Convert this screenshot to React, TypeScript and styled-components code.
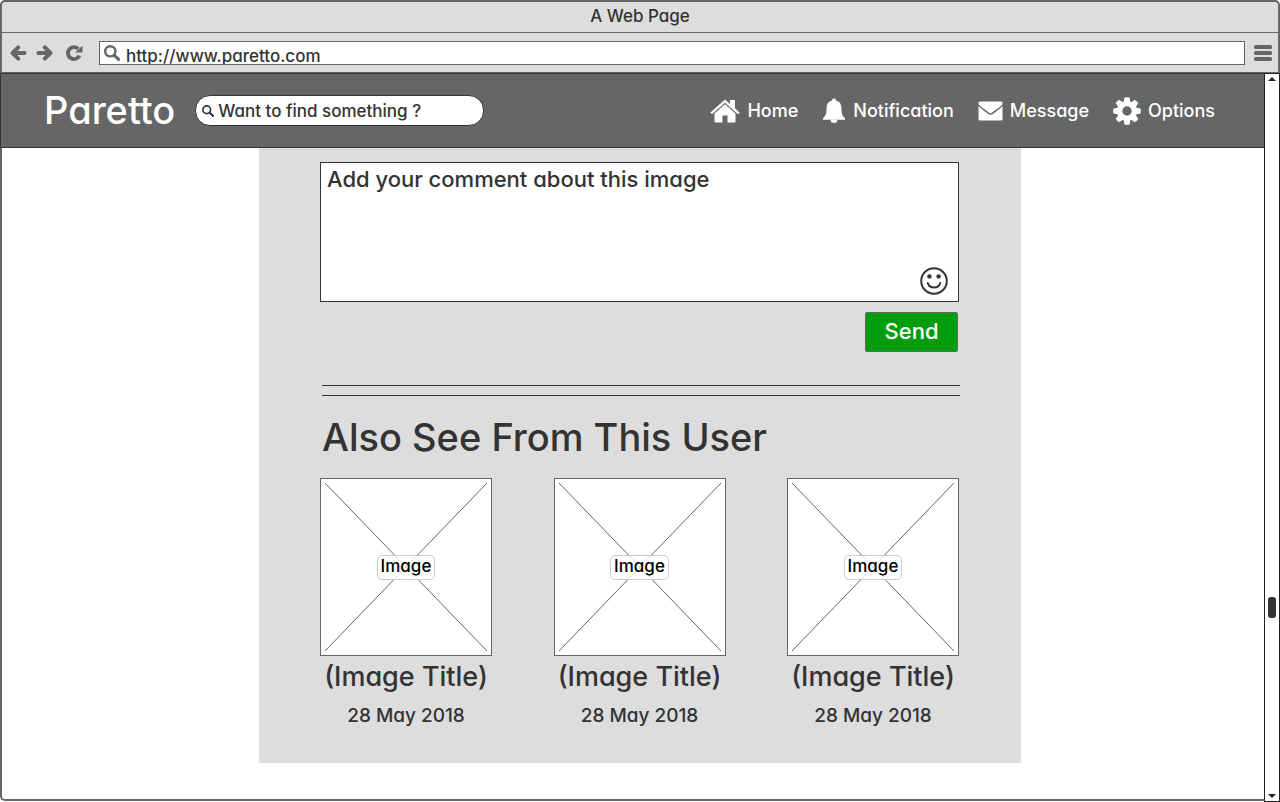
import React from 'react';
import styled, { createGlobalStyle, css } from 'styled-components';

const GlobalStyle = createGlobalStyle`
  *, *::before, *::after { box-sizing: border-box; }
  body {
    margin: 0;
    background: #fff;
    color: #333;
    font-family: Inter, Lato, "Liberation Sans", sans-serif;
    font-weight: 500;
    font-feature-settings: "cv11" 1, "ss03" 1;
  }
  button, input, textarea {
    font: inherit;
    font-feature-settings: inherit;
    color: inherit;
  }
`;

const BrowserWindow = styled.div`
  display: flex;
  flex-direction: column;
  min-height: 100vh;
`;

const Chrome = styled.div`
  border: 2px solid #666;
  border-bottom-width: 1px;
  border-radius: 5px 5px 0 0;
  background: #ddd;
`;

const TitleBar = styled.div`
  padding: 4px 0 5px;
  border-bottom: 1px solid #666;
  font-size: 17px;
  line-height: 21px;
  text-align: center;
`;

const Toolbar = styled.div`
  display: flex;
  align-items: center;
  gap: 9px;
  height: 39px;
  padding: 0 6px 0 8px;
`;

const ToolButton = styled.button<{ $spaced?: boolean }>`
  display: flex;
  padding: 0;
  border: 0;
  background: none;
  color: #666;
  ${(p) => p.$spaced && css`margin: 0 7px 0 4px;`}
`;

const AddressBar = styled.label`
  display: flex;
  flex: 1;
  align-items: center;
  gap: 6px;
  height: 24px;
  padding-left: 4px;
  border: 1px solid #666;
  background: #fff;
  color: #666;
`;

const AddressInput = styled.input`
  flex: 1;
  min-width: 0;
  height: 22px;
  padding: 6px 0 0;
  border: 0;
  outline: 0;
  background: none;
  color: #333;
  font-size: 17px;
  line-height: 16px;
`;

const Viewport = styled.div`
  display: flex;
  flex: 1;
`;

const Page = styled.div`
  display: flex;
  flex: 1;
  flex-direction: column;
  min-width: 0;
  margin-bottom: 1px;
`;

const Header = styled.header`
  display: flex;
  align-items: center;
  height: 75px;
  padding: 0 49px 2px 43px;
  border: 1px solid #333;
  border-right: 0;
  background: #666;
  color: #fff;
`;

const Logo = styled.a`
  color: #fff;
  font-size: 38px;
  line-height: 44px;
  text-decoration: none;
`;

const Search = styled.label`
  display: flex;
  align-items: center;
  gap: 4px;
  width: 289px;
  height: 31px;
  margin: 2px 0 0 20px;
  padding: 0 6px;
  border: 1px solid #333;
  border-radius: 15px;
  background: #fff;
  color: #333;
`;

const SearchInput = styled.input`
  flex: 1;
  min-width: 0;
  padding: 0;
  border: 0;
  outline: 0;
  background: none;
  font-size: 17px;
  line-height: 24px;
  &::placeholder { color: #333; opacity: 1; }
`;

const Nav = styled.nav`
  display: flex;
  gap: 24px;
  margin: 2px 0 0 auto;
`;

const NavLink = styled.a`
  display: flex;
  align-items: center;
  gap: 7px;
  color: #fff;
  font-size: 18px;
  line-height: 28px;
  text-decoration: none;
`;

const Main = styled.main`
  flex: 1;
  padding: 0 0 36px 14px;
  border: solid #666;
  border-width: 0 0 2px 2px;
  border-radius: 0 0 0 5px;
`;

const Panel = styled.div`
  max-width: 762px;
  margin: 0 auto;
  padding: 14px 62px 33px 61px;
  background: #ddd;
`;

const CommentForm = styled.form`
  display: flex;
  flex-direction: column;
  align-items: flex-end;
  gap: 10px;
`;

const CommentBox = styled.div`
  display: flex;
  align-items: flex-end;
  width: 100%;
  height: 140px;
  border: 1px solid #333;
  background: #fff;
`;

const CommentInput = styled.textarea`
  flex: 1;
  height: 100%;
  padding: 2px 6px;
  border: 0;
  outline: 0;
  resize: none;
  background: none;
  font-size: 22px;
  line-height: 28px;
  &::placeholder { color: #333; opacity: 1; }
`;

const EmojiButton = styled.button`
  display: flex;
  padding: 0 10px 6px 0;
  border: 0;
  background: none;
`;

const SendButton = styled.button`
  width: 93px;
  height: 40px;
  margin-right: 1px;
  padding: 0 0 2px;
  border: 1px solid #666;
  border-radius: 2px;
  background: #009e0f;
  color: #fff;
  font-size: 22px;
`;

const DoubleRule = styled.hr`
  height: 11px;
  margin: 33px -1px 0 2px;
  border: solid #333;
  border-width: 1px 0;
`;

const SectionTitle = styled.h2`
  margin: 17px 0 17px 2px;
  font-size: 38px;
  font-weight: 500;
  line-height: 48px;
  white-space: nowrap;
`;

const Gallery = styled.div`
  display: flex;
  justify-content: space-between;
`;

const Card = styled.figure`
  display: flex;
  flex-direction: column;
  align-items: center;
  width: 172px;
  margin: 0;
`;

const Thumb = styled.div`
  display: grid;
  width: 100%;
  height: 178px;
  place-items: center;
  border: 1px solid #666;
  background: #fff;
  & > * { grid-area: 1 / 1; }
`;

const ThumbLabel = styled.span`
  z-index: 1;
  height: 25px;
  padding: 0 3px;
  border: 1px solid #ccc;
  border-radius: 5px;
  background: rgba(255, 255, 255, 0.8);
  color: #000;
  font-size: 17px;
  line-height: 21px;
`;

const CardTitle = styled.figcaption`
  margin-top: 4px;
  font-size: 27px;
  line-height: 34px;
  white-space: nowrap;
`;

const CardDate = styled.time`
  margin-top: 8px;
  font-size: 19px;
  line-height: 28px;
`;

const Scrollbar = styled.div`
  display: flex;
  flex-direction: column;
  align-items: center;
  width: 16px;
  padding: 3px 0;
  border: 1px solid #222;
  background: #fff;
`;

const Track = styled.div`
  display: flex;
  flex: 1;
  flex-direction: column;
  align-items: center;
`;

const TrackSpace = styled.div<{ $grow: number }>`
  flex: ${(p) => p.$grow};
`;

const ThumbGrip = styled.div`
  width: 8px;
  height: 21px;
  border-radius: 3px;
  background: #333;
`;

const ArrowIcon = ({ flip }: { flip?: boolean }) => (
  <svg width="17" height="16" viewBox="0 0 17 16" fill="none" stroke="currentColor" strokeWidth="4" strokeLinecap="round" strokeLinejoin="round">
    {flip ? <path d="M2.4 8H14M8.8 2.4L14.4 8L8.8 13.6" /> : <path d="M14.6 8H3M8.2 2.4L2.6 8L8.2 13.6" />}
  </svg>
);

const ReloadIcon = () => (
  <svg width="17" height="16" viewBox="0 0 17 16">
    <path d="M13.4 10.6A6 6 0 1 1 12.2 3.8" fill="none" stroke="currentColor" strokeWidth="3.8" />
    <path d="M16.5 .5V7.5H9.2Z" fill="currentColor" />
  </svg>
);

const GlassIcon = ({ size, weight }: { size: number; weight: number }) => (
  <svg width={size} height={size} viewBox="0 0 16 16" fill="none" stroke="currentColor" strokeWidth={weight} strokeLinecap="round">
    <circle cx="6.3" cy="6.3" r="5.1" />
    <path d="M10.3 10.3L14.6 14.4" strokeWidth={weight + 0.6} />
  </svg>
);

const MenuIcon = () => (
  <svg width="18" height="16" viewBox="0 0 18 16" fill="currentColor">
    <rect y="0" width="18" height="4" rx="1.5" />
    <rect y="6" width="18" height="4" rx="1.5" />
    <rect y="12" width="18" height="4" rx="1.5" />
  </svg>
);

const HomeIcon = () => (
  <svg width="30" height="24" viewBox="0 0 30 24" fill="currentColor">
    <path d="M15 .5L20 5V1H25V9.2L29.6 13.4L28 15.2L15 3.8L2 15.2L.4 13.4Z" />
    <path d="M15 5.3L25.5 14.4V22.5Q25.5 23.5 24.5 23.5H17.5V16.5H12.5V23.5H5.5Q4.5 23.5 4.5 22.5V14.4Z" />
  </svg>
);

const BellIcon = () => (
  <svg width="24" height="26" viewBox="0 0 24 26" fill="currentColor">
    <path d="M12 .6C13.3 .6 14 1.4 14 2.5C17.6 3.4 19.4 6 19.4 9.8C19.4 15 20 17.6 23 20.2V21.8H1V20.2C4 17.6 4.6 15 4.6 9.8C4.6 6 6.4 3.4 10 2.5C10 1.4 10.7 .6 12 .6Z" />
    <path d="M8.6 21.5H15.4A3.4 3.6 0 0 1 8.6 21.5Z" />
  </svg>
);

const MailIcon = () => (
  <svg width="25" height="20" viewBox="0 0 25 20" fill="currentColor">
    <path d="M2 .5H23Q24.5 .5 24.5 2V3.6C21.5 6.6 17 9.5 14 11.7Q12.5 12.6 11 11.7C8 9.5 3.5 6.6 .5 3.6V2Q.5 .5 2 .5Z" />
    <path d="M.5 5.2C3.5 8 7 10.6 10.2 12.9Q12.5 14.4 14.8 12.9C18 10.6 21.5 8 24.5 5.2V18Q24.5 19.5 23 19.5H2Q.5 19.5 .5 18Z" />
  </svg>
);

const GearIcon = () => (
  <svg width="28" height="28" viewBox="0 0 28 28" fill="currentColor">
    {[0, 45, 90, 135].map((a) => (
      <path key={a} d="M11.4 0.6Q14 -.2 16.6 .6L17.4 6H10.6ZM11.4 27.4Q14 28.2 16.6 27.4L17.4 22H10.6Z" transform={`rotate(${a} 14 14)`} />
    ))}
    <circle cx="14" cy="14" r="7.4" fill="none" stroke="currentColor" strokeWidth="5.4" />
  </svg>
);

const SmileIcon = () => (
  <svg width="28" height="28" viewBox="0 0 28 28" fill="none" stroke="#333" strokeWidth="2">
    <circle cx="14" cy="14" r="12.8" />
    <circle cx="9.4" cy="9.4" r="2.2" fill="#333" stroke="none" />
    <circle cx="18.6" cy="9.4" r="2.2" fill="#333" stroke="none" />
    <path d="M7.8 16C9.6 22 18.4 22 20.2 16" strokeLinecap="round" />
  </svg>
);

const CrossLines = () => (
  <svg width="162" height="168" viewBox="0 0 162 168" stroke="#666" strokeWidth="1">
    <path d="M0 0L162 168M162 0L0 168" />
  </svg>
);

const ScrollArrow = ({ down }: { down?: boolean }) => (
  <svg width="8" height="4" viewBox="0 0 8 4" fill="#222">
    <path d={down ? 'M0 0H8L4 4Z' : 'M0 4H8L4 0Z'} />
  </svg>
);

const links = [
  { label: 'Home', Icon: HomeIcon },
  { label: 'Notification', Icon: BellIcon },
  { label: 'Message', Icon: MailIcon },
  { label: 'Options', Icon: GearIcon },
];

const cards = [1, 2, 3].map((id) => ({ id, title: '(Image Title)', date: '28 May 2018' }));

export default function App() {
  return (
    <BrowserWindow>
      <GlobalStyle />
      <Chrome>
        <TitleBar>A Web Page</TitleBar>
        <Toolbar>
          <ToolButton aria-label="Back"><ArrowIcon /></ToolButton>
          <ToolButton aria-label="Forward"><ArrowIcon flip /></ToolButton>
          <ToolButton aria-label="Reload" $spaced><ReloadIcon /></ToolButton>
          <AddressBar>
            <GlassIcon size={16} weight={2.4} />
            <AddressInput aria-label="Address" defaultValue="http://www.paretto.com" />
          </AddressBar>
          <ToolButton aria-label="Menu"><MenuIcon /></ToolButton>
        </Toolbar>
      </Chrome>
      <Viewport>
        <Page>
          <Header>
            <Logo href="#">Paretto</Logo>
            <Search>
              <GlassIcon size={12} weight={2.2} />
              <SearchInput aria-label="Search" placeholder="Want to find something ?" />
            </Search>
            <Nav>
              {links.map(({ label, Icon }) => (
                <NavLink key={label} href="#"><Icon />{label}</NavLink>
              ))}
            </Nav>
          </Header>
          <Main>
            <Panel>
              <CommentForm onSubmit={(e) => e.preventDefault()}>
                <CommentBox>
                  <CommentInput aria-label="Comment" placeholder="Add your comment about this image" />
                  <EmojiButton type="button" aria-label="Insert emoji"><SmileIcon /></EmojiButton>
                </CommentBox>
                <SendButton type="submit">Send</SendButton>
              </CommentForm>
              <DoubleRule />
              <SectionTitle>Also See From This User</SectionTitle>
              <Gallery>
                {cards.map((c) => (
                  <Card key={c.id}>
                    <Thumb>
                      <CrossLines />
                      <ThumbLabel>Image</ThumbLabel>
                    </Thumb>
                    <CardTitle>{c.title}</CardTitle>
                    <CardDate>{c.date}</CardDate>
                  </Card>
                ))}
              </Gallery>
            </Panel>
          </Main>
        </Page>
        <Scrollbar>
          <ScrollArrow />
          <Track>
            <TrackSpace $grow={517} />
            <ThumbGrip />
            <TrackSpace $grow={176} />
          </Track>
          <ScrollArrow down />
        </Scrollbar>
      </Viewport>
    </BrowserWindow>
  );
}
